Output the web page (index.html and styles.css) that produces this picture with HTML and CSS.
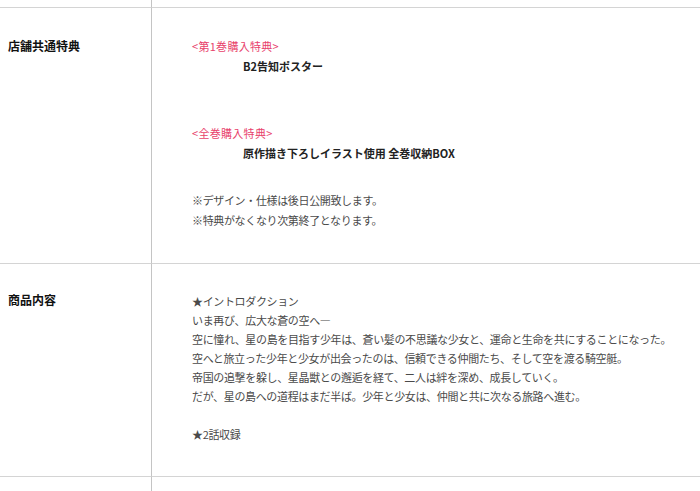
FILE: index.html
```html
<!DOCTYPE html>
<html lang="ja">
<head>
<meta charset="utf-8">
<link rel="stylesheet" href="styles.css">
</head>
<body>
<table class="spec">
  <tr class="row-prev"><th></th><td></td></tr>
  <tr class="row-bonus">
    <th>店舗共通特典</th>
    <td>
      <div class="block">
        <p class="pink">&lt;第1巻購入特典&gt;</p>
        <p class="item">B2告知ポスター</p>
      </div>
      <div class="block gap-l">
        <p class="pink">&lt;全巻購入特典&gt;</p>
        <p class="item">原作描き下ろしイラスト使用 全巻収納BOX</p>
      </div>
      <div class="block gap-m tight">
        <p>※デザイン・仕様は後日公開致します。</p>
        <p>※特典がなくなり次第終了となります。</p>
      </div>
    </td>
  </tr>
  <tr class="row-content">
    <th>商品内容</th>
    <td class="tight">
      <p>★イントロダクション</p>
      <p>いま再び、広大な蒼の空へ―</p>
      <p>空に憧れ、星の島を目指す少年は、蒼い髪の不思議な少女と、運命と生命を共にすることになった。</p>
      <p>空へと旅立った少年と少女が出会ったのは、信頼できる仲間たち、そして空を渡る騎空艇。</p>
      <p>帝国の追撃を躱し、星晶獣との邂逅を経て、二人は絆を深め、成長していく。</p>
      <p>だが、星の島への道程はまだ半ば。少年と少女は、仲間と共に次なる旅路へ進む。</p>
      <p class="blank">&nbsp;</p>
      <p>★2話収録</p>
    </td>
  </tr>
  <tr class="row-next"><th></th><td></td></tr>
</table>
</body>
</html>
```

FILE: styles.css
```css
html, body {
  margin: 0;
  padding: 0;
  background: #fff;
}
body {
  font-family: "Noto Sans CJK JP", "Noto Sans", sans-serif;
  color: #4a4a4a;
}
.spec {
  width: 700px;
  border-collapse: separate;
  border-spacing: 0;
}
.spec th, .spec td {
  padding: 0;
  vertical-align: top;
  border-bottom: 1px solid #d4d4d4;
  text-align: left;
}
.spec th {
  width: 143px;
  padding-left: 8px;
  border-right: 1px solid #c4c4c4;
  font-size: 12px;
  line-height: 20px;
  font-weight: bold;
  color: #111;
}
.spec td {
  padding-left: 40px;
  font-size: 11px;
}
.spec p {
  margin: 0;
}
.tight {
  letter-spacing: -0.35px;
}
.row-prev th, .row-prev td {
  height: 7px;
}
.row-bonus th, .row-bonus td {
  padding-top: 28px;
  padding-bottom: 33px;
}
.row-bonus td {
  line-height: 20px;
}
.row-content th {
  padding-top: 26px;
}
.row-content td {
  padding-top: 28px;
  padding-bottom: 32px;
  line-height: 19px;
}
.row-next th, .row-next td {
  height: 30px;
  border-bottom: none;
}
.pink {
  color: #e8416b;
  letter-spacing: 0.3px;
}
.item {
  padding-left: 51px;
  font-weight: bold;
  color: #222;
}
.gap-l {
  margin-top: 47px;
}
.gap-m {
  margin-top: 27px;
}
```
